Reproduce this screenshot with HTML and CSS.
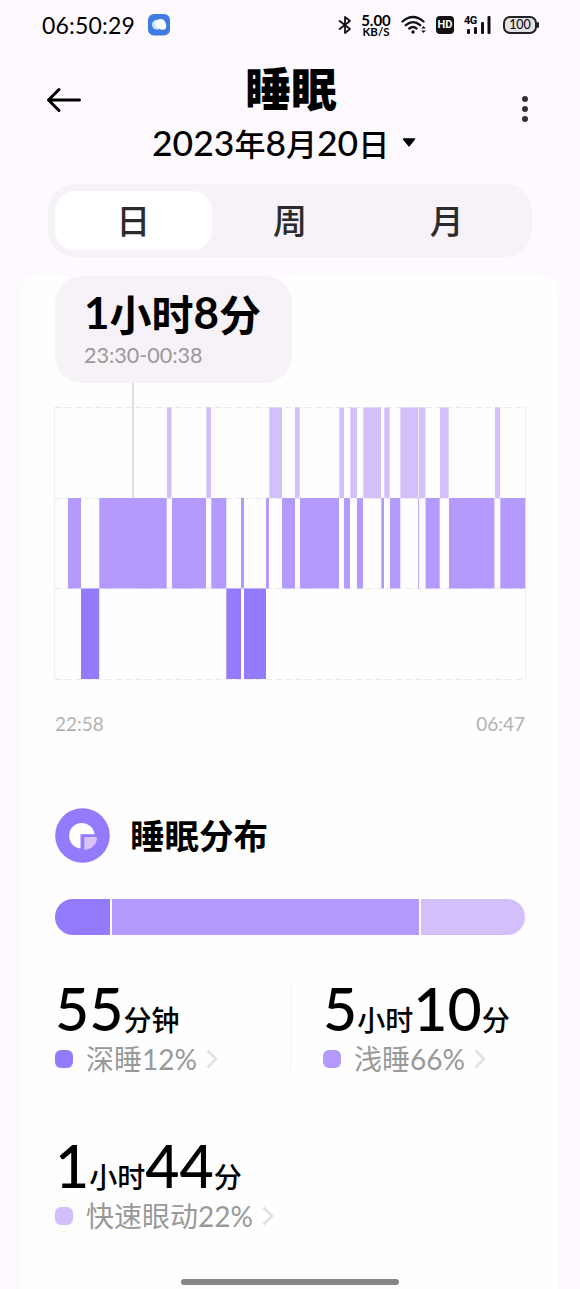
FILE: index.html
```html
<!DOCTYPE html>
<html lang="zh-CN">
<head>
<meta charset="utf-8">
<title>睡眠</title>
<link rel="stylesheet" href="styles.css">
</head>
<body>
<div class="screen">
  <div class="status">
    <span class="clock">06:50:29</span>
    <svg class="app-badge" width="22" height="22" viewBox="0 0 22 22"><rect width="22" height="21.5" rx="6" fill="#3f7be0"/><circle cx="9" cy="10.8" r="5" fill="#cfe6ff"/><circle cx="12.6" cy="10" r="5" fill="#fff"/><circle cx="14.6" cy="12.2" r="3.6" fill="#fff"/></svg>
    <svg class="bluetooth" width="16" height="20" viewBox="0 0 16 20" fill="none" stroke="#111" stroke-width="1.8" stroke-linejoin="round"><path d="M2 5.5 13 14 8 18V2l5 4L2 14.500"/></svg>
    <span class="speed"><b>5.00</b><b class="unit">KB/S</b></span>
    <svg class="wifi" width="26" height="20" viewBox="0 0 26 20" fill="none" stroke="#111" stroke-width="2.300" stroke-linecap="round"><path d="M1.500 6.500Q12 -2.500 22.500 6.500M4.800 10.200Q12 4 19.200 10.200M8.300 13.500Q12 10.600 15.500 13.500"/><circle cx="12" cy="17" r="1.700" fill="#111" stroke="none"/><path d="M20.200 13.500l2.300-2.500 2.300 2.500zM20.200 15.500l2.300 2.500 2.300-2.500z" fill="#111" stroke="none"/></svg>
    <span class="hd">HD</span>
    <span class="cell"><span class="gen">4G</span><svg width="28" height="20" viewBox="0 0 28 20" fill="#111"><rect x="3" y="14" width="3" height="5" rx="1"/><rect x="10" y="12" width="3" height="7" rx="1"/><rect x="17" y="7" width="3" height="12" rx="1"/><rect x="23.500" y="1" width="3" height="18" rx="1"/></svg></span>
    <span class="battery">100</span>
  </div>

  <header class="top">
    <svg class="back" width="36" height="26" viewBox="0 0 36 26" fill="none" stroke="#000" stroke-width="3" stroke-linecap="round" stroke-linejoin="round"><path d="M33.500 13H2.500M13 2.500 2.500 13 13 23.500"/></svg>
    <div class="heading">
      <h1>睡眠</h1>
      <div class="date"><span class="num">2023</span><span>年</span><span class="num">8</span><span>月</span><span class="num">20</span><span>日</span><svg class="caret" width="14" height="9" viewBox="0 0 14 9"><path d="M1.500 1h11L7 7.800z" stroke="#000" stroke-width="1.500" stroke-linejoin="round"/></svg></div>
    </div>
    <svg class="more" width="8" height="28" viewBox="0 0 8 28" fill="#333"><circle cx="4" cy="4" r="3"/><circle cx="4" cy="14" r="3"/><circle cx="4" cy="24" r="3"/></svg>
  </header>

  <nav class="tabs"><span class="tab on">日</span><span class="tab">周</span><span class="tab">月</span></nav>

  <main class="card">
    <section class="tip">
      <div class="tip-title"><span class="num">1</span><span>小时</span><span class="num">8</span><span>分</span></div>
      <div class="tip-range">23:30-00:38</div>
    </section>
    <svg class="chart" width="472" height="298" viewBox="54 383 472 298">
      <g fill="none" stroke="#ebebeb" stroke-width="1">
        <path d="M54.500 407v273M525.500 407v273" stroke="#f0f0f0"/>
        <path d="M55 407.500h471M55 498.500h471M55 588.500h471M55 679.500h471" stroke-dasharray="7 3"/>
      </g>
      <path d="M133 383v115" stroke="#dedede" stroke-width="2"/>
      <g fill="#d3c0fb">
        <path d="M167 407.500h4.500V498H167zM206.300 407.500h4.700V498h-4.700zM269.300 407.500H282V498h-12.700zM295 407.500h4.700V498H295zM339.300 407.500h4.700V498h-4.700zM350.300 407.500h6.700V498h-6.700zM363.300 407.500H381V498h-17.700zM384.300 407.500h5.400V498h-5.400zM400.300 407.500h18V498h-18zM419 407.500h6.300V498H419zM440 407.500h8.700V498H440zM495 407.500h5V498h-5z"/>
      </g>
      <g fill="#b49aff">
        <path d="M68 498h13v90.500H68zM99.300 498h67.400v90.500H99.300zM172 498h34v90.500h-34zM211.300 498h15v90.500h-15zM241 498h3v90.500h-3zM266 498h3v90.500h-3zM282 498h13v90.500h-13zM300 498h39v90.500h-39zM344 498h6v90.500h-6zM357 498h6v90.500h-6zM381.300 498h2.700v90.500h-2.700zM390 498h10.300v90.500H390zM418.200 498h.9v90.500h-.9zM425.600 498h14.100v90.500h-14.100zM449 498h45.400v90.500H449zM500.300 498h25v90.500h-25z"/>
      </g>
      <g fill="#947afd">
        <path d="M81 588.500h18.200V679H81zM226.300 588.500H241V679h-14.700zM244 588.500h22V679h-22z"/>
      </g>
    </svg>
    <div class="axis"><span>22:58</span><span>06:47</span></div>

    <h2 class="section"><svg width="55" height="55" viewBox="0 0 55 55"><circle cx="27.500" cy="27.500" r="27.300" fill="#947afd"/><path d="M39.600 26.300A12.800 12.800 0 1 0 25.500 40.500V26.300z" fill="#fff"/><path d="M29.300 29h12.700A12.900 12.900 0 0 1 29.300 42z" fill="#d8c3fb"/></svg><span>睡眠分布</span></h2>

    <div class="split"><i class="deep"></i><i class="light"></i><i class="rem"></i></div>

    <div class="stats">
      <div class="stat">
        <div class="value"><span class="num">55</span><span>分钟</span></div>
        <div class="label"><i class="deep"></i><span>深睡12%</span><svg width="12" height="20" viewBox="0 0 12 20"><path d="M1.500 1.500 10 10l-8.500 8.500"/></svg></div>
      </div>
      <div class="stat second">
        <div class="value"><span class="num">5</span><span>小时</span><span class="num ten">10</span><span>分</span></div>
        <div class="label"><i class="light"></i><span>浅睡66%</span><svg width="12" height="20" viewBox="0 0 12 20"><path d="M1.500 1.500 10 10l-8.500 8.500"/></svg></div>
      </div>
      <div class="stat">
        <div class="value"><span class="num">1</span><span>小时</span><span class="num">44</span><span>分</span></div>
        <div class="label"><i class="rem"></i><span>快速眼动22%</span><svg width="12" height="20" viewBox="0 0 12 20"><path d="M1.500 1.500 10 10l-8.500 8.500"/></svg></div>
      </div>
    </div>
  </main>
  <div class="home"></div>
</div>
</body>
</html>
```
FILE: styles.css
```css
* { box-sizing: border-box; }
body { margin: 0; background: #fdf9ff; color: #000; font-family: Lato, "Noto Sans CJK SC", sans-serif; }
h1, h2 { margin: 0; }
svg { display: block; flex: none; }
i { display: block; }
span { white-space: nowrap; }
.screen { position: relative; width: 580px; height: 1289px; overflow: hidden; display: flex; flex-direction: column; }

.status { display: flex; align-items: center; height: 50px; padding-left: 42px; flex: none; }
.clock { width: 106px; font-size: 23px; line-height: 50px; letter-spacing: .2px; }
.app-badge { margin-right: 167px; }
.bluetooth { margin-right: 7px; }
.speed { display: flex; flex-direction: column; align-items: center; width: 32px; font-size: 15px; line-height: 12px; }
.speed .unit { font-size: 11.5px; line-height: 11px; }
.wifi { margin-left: 9px; }
.hd { margin-left: 9px; width: 18px; height: 18px; border-radius: 4px; background: #111; color: #fff; font: bold 11px/18px Roboto, sans-serif; text-align: center; }
.cell { position: relative; margin-left: 10px; }
.gen { position: absolute; left: 0; top: 0; font: bold 11px/11px Roboto, sans-serif; letter-spacing: -.5px; }
.battery { position: relative; margin-left: 11px; width: 34px; height: 18px; border: 2px solid #222; border-radius: 7px; background: #e4e1e6; font-size: 12.5px; line-height: 14px; text-align: center; }
.battery::after { content: ""; position: absolute; right: -4px; top: 4px; width: 2px; height: 6px; background: #222; border-radius: 1px; }

.top { display: flex; height: 134px; flex: none; padding-left: 46px; }
.back { margin-top: 37px; }
.heading { width: 276px; margin-left: 70px; }
h1 { margin: 9px 0 0 93px; font-size: 46px; line-height: 60px; font-weight: 900; }
.date { display: flex; align-items: center; height: 46px; font-size: 31px; font-weight: 500; }
.date .num { font-size: 35.500px; }
.caret { margin-left: 13px; }
.more { margin: 45px 0 0 93px; }

.tabs { display: flex; flex: none; width: 484px; height: 73px; margin-left: 48px; padding: 7px; border-radius: 27px; background: #f7f2f7; }
.tab { width: 157px; height: 59px; border-radius: 20px; text-align: center; font-size: 34px; line-height: 60px; font-weight: 500; color: #2b2b2b; }
.tab.on { background: #fff; }

.card { width: 537px; height: 1013px; flex: none; margin: 19px 0 0 21px; padding-left: 34px; background: #fefefe; border-radius: 14px 14px 0 0; }
.tip { width: 237px; height: 107px; border-radius: 27px; background: #f7f2f7; padding: 6px 0 0 29px; }
.tip-title { display: flex; align-items: center; height: 60px; font-size: 42px; font-weight: 700; }
.tip-title .num { font-size: 44px; }
.tip-range { font-size: 21.500px; line-height: 26px; color: #999; }
.chart { margin-left: -1px; }
.axis { display: flex; justify-content: space-between; width: 470px; margin-top: 31px; font-size: 19px; line-height: 24px; color: #b2b2b2; }
.section { display: flex; align-items: center; gap: 20px; margin-top: 72px; height: 55px; font-size: 34.500px; line-height: 55px; font-weight: 700; }
.split { display: flex; gap: 2px; width: 470px; height: 36px; margin-top: 36px; border-radius: 18px; overflow: hidden; }
.deep { background: #947afd; }
.light { background: #b49aff; }
.rem { background: #d3c0fb; }
.split .deep { width: 54.500px; }
.split .light { width: 307px; }
.split .rem { flex: 1; }

.stats { display: grid; grid-template-columns: 268px 220px; grid-auto-rows: 157px; margin-top: 41px; }
.second { position: relative; }
.second::before { content: ""; position: absolute; left: -33px; top: 6px; width: 1px; height: 88px; background: #f3f3f3; }
.value { display: flex; align-items: baseline; height: 66px; line-height: 66px; font-size: 28px; font-weight: 500; }
.value .num { font-size: 59px; }
.label { display: flex; align-items: center; height: 34px; font-size: 28px; line-height: 34px; color: #999; }
.label i { width: 18px; height: 18px; border-radius: 6px; margin-right: 13px; }
.label svg { margin-left: 9px; fill: none; stroke: #e2e2e2; stroke-width: 2.600; }
.home { position: absolute; left: 181px; bottom: 4px; width: 218px; height: 6px; border-radius: 3px; background: #868686; }
```
